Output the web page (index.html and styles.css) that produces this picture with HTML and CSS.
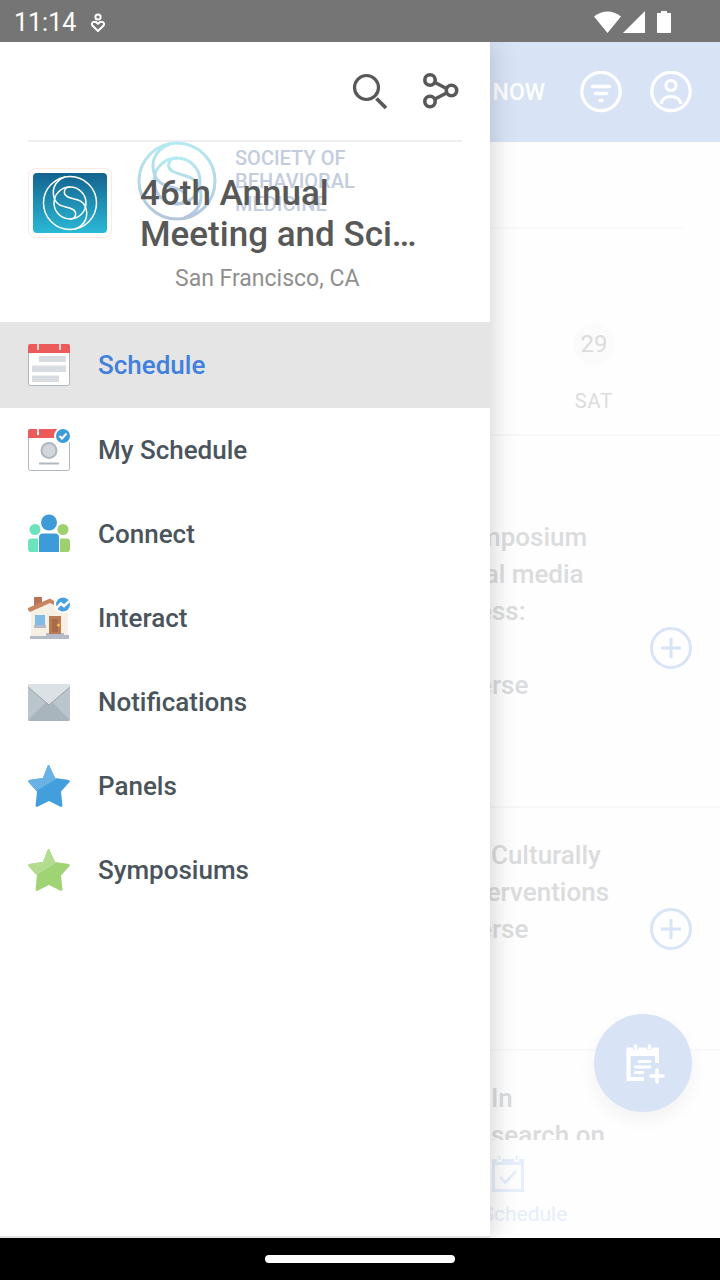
FILE: index.html
```html
<!DOCTYPE html>
<html lang="en">
<head>
	<meta charset="UTF-8">
	<meta name="viewport" content="width=device-width, initial-scale=1">
	<title>Schedule</title>
	<link rel="stylesheet" href="styles.css">
</head>
<body>
	<div class="screen">
		<div class="status">
			<span class="clock">11:14</span>
			<svg class="status-heart" width="16" height="20" viewBox="0 0 16 20" fill="none" stroke="#fff" stroke-width="2">
				<circle cx="8" cy="4" r="2.6"/>
				<path d="M8 18L2.6 12.8C.2 9.900 4.600 6.800 8 10.800C11.400 6.800 15.800 9.900 13.400 12.800Z" stroke-linejoin="round"/>
			</svg>
			<svg class="status-icons" width="78" height="24" viewBox="0 0 78 24" fill="#fff">
				<path d="M0 5.500Q13.500-4.500 27 5.500L13.500 22Z"/>
				<path d="M51 0V22H29Z"/>
				<path d="M63 2H67V0H73V2H77V22H63Z"/>
			</svg>
		</div>

		<div class="stage">
			<aside class="drawer">
				<div class="tools">
					<button type="button" aria-label="Search">
						<svg width="42" height="42" viewBox="0 0 42 42" fill="none" stroke="#585858" stroke-width="3.200">
							<circle cx="16.500" cy="17.500" r="12"/>
							<path d="M26.500 28.500L36 38" stroke-width="3.800"/>
						</svg>
					</button>
					<button type="button" aria-label="Share">
						<svg width="42" height="42" viewBox="0 0 42 42" fill="none" stroke="#585858" stroke-width="3.600">
							<circle cx="10" cy="10" r="5.200"/>
							<circle cx="10" cy="31.500" r="5.200"/>
							<circle cx="31.500" cy="20.500" r="5.200"/>
							<path d="M15 12.500L26.500 18.500M15 29L26.500 23"/>
						</svg>
					</button>
				</div>

				<div class="event">
					<div class="brand">
						<svg width="80" height="80" viewBox="0 0 80 80" fill="none" stroke="url(#brandLine)" stroke-width="3">
							<defs>
								<linearGradient id="brandLine" x1="0" y1="0" x2="0" y2="1">
									<stop offset="0" stop-color="#b5eaf2"/>
									<stop offset="1" stop-color="#b4c6dc"/>
								</linearGradient>
							</defs>
							<circle cx="40" cy="40" r="38"/>
							<circle cx="40" cy="40" r="23"/>
							<path d="M33 3C17 9 13 22 18 35C22 45 34 45 43 49C52 53 49 63 40 63"/>
							<path d="M47 77C63 71 67 58 62 45C58 35 46 35 37 31C28 27 31 17 40 17"/>
						</svg>
						<p>SOCIETY OF<br>BEHAVIORAL<br>MEDICINE</p>
					</div>
					<div class="thumb">
						<svg width="74" height="60" viewBox="0 0 74 60" fill="none" stroke="#fff" stroke-width="1.500">
							<circle cx="37" cy="30" r="26.500"/>
							<circle cx="37" cy="30" r="16"/>
							<path d="M32 4C21 8 18 18 22 27C25 34 33 33 39 36C45 39 43 46 37 46"/>
							<path d="M42 56C53 52 56 42 52 33C49 26 41 27 35 24C29 21 31 14 37 14"/>
						</svg>
					</div>
					<div class="event-text">
						<h1>46th Annual<br>Meeting and Sci…</h1>
						<p>San Francisco, CA</p>
					</div>
				</div>

				<nav class="menu">
					<a href="#" class="active">
						<svg width="42" height="42" viewBox="0 0 42 42">
							<rect x=".5" y="2" width="41" height="39.500" rx="2" fill="#fff" stroke="#b0b7bd"/>
							<path d="M0 9V2Q0 0 2 0H9V6H11V0H31V6H33V0H40Q42 0 42 2V9Z" fill="#ed5a5a"/>
							<path d="M9 0H11V6H9ZM31 0H33V6H31Z" fill="#e5d5d5"/>
							<path d="M11 12H38V18H11ZM4 21.500H38V28H4ZM4 31.500H31V38H4Z" fill="#d9dde1"/>
						</svg>
						<span>Schedule</span>
					</a>
					<a href="#">
						<svg width="42" height="42" viewBox="0 0 42 42">
							<rect x=".5" y="2" width="41" height="39.500" rx="2" fill="#fff" stroke="#b0b7bd"/>
							<path d="M0 9V2Q0 0 2 0H9V6H11V0H30V9Z" fill="#ed5a5a"/>
							<circle cx="35" cy="7" r="9" fill="#fff"/>
							<circle cx="35" cy="7" r="7" fill="#3d9bd8"/>
							<path d="M31.500 7L34 9.500L38.500 4.500" fill="none" stroke="#fff" stroke-width="2"/>
							<circle cx="21" cy="21.500" r="7.500" fill="#d3d7db" stroke="#aeb7bd" stroke-width="2"/>
							<path d="M11 34.500H31" stroke="#b0b9c0" stroke-width="2"/>
						</svg>
						<span>My Schedule</span>
					</a>
					<a href="#">
						<svg width="42" height="42" viewBox="0 0 42 42">
							<g fill="#6be3bf"><circle cx="7" cy="16.500" r="5.500"/><path d="M0 36V28.500Q0 25.500 4 25.500H10V39H3Q0 39 0 36Z"/></g>
							<g fill="#9fd06f"><circle cx="35" cy="16.500" r="5.500"/><path d="M32 39V25.500H38Q42 25.500 42 28.500V36Q42 39 39 39Z"/></g>
							<circle cx="21" cy="9.500" r="8" fill="#3d9bd8"/>
							<path d="M11 39V24Q11 20.500 15 20.500H27Q31 20.500 31 24V39Z" fill="#3d9bd8"/>
						</svg>
						<span>Connect</span>
					</a>
					<a href="#">
						<svg width="42" height="42" viewBox="0 0 42 42">
							<path d="M3 15L24 4L40 16V39H3Z" fill="#f6efe4"/>
							<path d="M6 0H14V10H6Z" fill="#b57456"/>
							<path d="M0 11L22 1.500L26 4V8L22 6L2 15L0 13Z" fill="#c98562"/>
							<path d="M7 18H17V29H7Z" fill="#7fbbe6"/>
							<path d="M6 28H18V31H6ZM2 39H18V36H36V38H41V42H2Z" fill="#b4bbc8"/>
							<path d="M21 19H33V37H21Z" fill="#b97a55"/>
							<path d="M24 22H30V35H24Z" fill="#a9694a"/>
							<circle cx="30.500" cy="28" r="1.500" fill="#f4c542"/>
							<circle cx="35" cy="7.500" r="9" fill="#fff"/>
							<circle cx="35" cy="7.500" r="7" fill="#4a9fe0"/>
							<path d="M28.500 11L33 6.500L36 9L41.500 4" fill="none" stroke="#fff" stroke-width="2.500"/>
						</svg>
						<span>Interact</span>
					</a>
					<a href="#">
						<svg width="42" height="42" viewBox="0 0 42 42">
							<rect y="3" width="42" height="37" rx="2" fill="#bac5cc"/>
							<path d="M0 39L21 18L42 39Q41 40 40 40H2Q1 40 0 39Z" fill="#a9b5bd"/>
							<path d="M0 5Q0 3 2 3H40Q42 3 42 5V6L21 24L0 6Z" fill="#dbe1e5"/>
							<path d="M0 6L21 24L42 6" fill="none" stroke="#98a3ab"/>
						</svg>
						<span>Notifications</span>
					</a>
					<a href="#">
						<svg width="42" height="42" viewBox="0 0 42 42">
							<path d="M21 0L27 13L41 15L42 16.500L33 26.500L34.500 41L33 42L21 36L9 42L7.500 41L9 26.500L0 16.500L1 15L15 13L20 0Z" fill="#439fdc"/>
							<path d="M20 0H21L27 13L29 13.500L8.500 26L0 16.500L1 15L15 13Z" fill="#69b2e3"/>
						</svg>
						<span>Panels</span>
					</a>
					<a href="#">
						<svg width="42" height="42" viewBox="0 0 42 42">
							<path d="M21 0L27 13L41 15L42 16.500L33 26.500L34.500 41L33 42L21 36L9 42L7.500 41L9 26.500L0 16.500L1 15L15 13L20 0Z" fill="#a0d374"/>
							<path d="M20 0H21L27 13L29 13.500L8.500 26L0 16.500L1 15L15 13Z" fill="#b3dc90"/>
						</svg>
						<span>Symposiums</span>
					</a>
				</nav>
			</aside>

			<main class="app">
				<header class="topbar">
					<button type="button" class="now">NOW</button>
					<button type="button" aria-label="Filter">
						<svg width="42" height="42" viewBox="0 0 42 42" fill="none" stroke="#fff" stroke-width="3.500" stroke-linecap="round">
							<circle cx="21" cy="20.500" r="19.200" stroke-width="3.200"/>
							<path d="M12.500 15.500H29.500M15.500 22.500H26.500M20 29.500H22"/>
						</svg>
					</button>
					<button type="button" aria-label="Profile">
						<svg width="42" height="42" viewBox="0 0 42 42" fill="none" stroke="#fff" stroke-width="3.200">
							<circle cx="21" cy="20.500" r="19.200"/>
							<circle cx="21" cy="14.500" r="5"/>
							<path d="M11 33Q12.500 25.500 21 25.500Q29.500 25.500 31 33"/>
						</svg>
					</button>
				</header>

				<div class="filters"></div>

				<div class="days">
					<div class="day">
						<span class="date">29</span>
						<span class="weekday">SAT</span>
					</div>
				</div>

				<div class="sessions">
					<article class="session tall">
						<h2>mposium<br>ial media<br>ess:<br><br>erse</h2>
						<button type="button" aria-label="Add session">
							<svg width="42" height="42" viewBox="0 0 42 42" fill="none" stroke="#d8e4f7" stroke-width="3">
								<circle cx="21" cy="21" r="19.500"/>
								<path d="M11 21H31M21 11V31"/>
							</svg>
						</button>
					</article>
					<article class="session">
						<h2>&nbsp;&nbsp;Culturally<br>terventions<br>erse</h2>
						<button type="button" aria-label="Add session">
							<svg width="42" height="42" viewBox="0 0 42 42" fill="none" stroke="#d8e4f7" stroke-width="3">
								<circle cx="21" cy="21" r="19.500"/>
								<path d="M11 21H31M21 11V31"/>
							</svg>
						</button>
					</article>
					<article class="session">
						<h2>&nbsp;&nbsp;In<br>&nbsp;&nbsp;search on</h2>
					</article>
				</div>

				<footer class="tabs">
					<a href="#">
						<svg width="34" height="38" viewBox="0 0 34 38" fill="none" stroke="#e6eefa" stroke-width="3">
							<path d="M2.500 6V35.500H31.500V6"/>
							<path d="M1 10V4H6V7H11V4H23V7H28V4H33V10Z" fill="#e6eefa" stroke="none"/>
							<path d="M8.500 1V5M25.500 1V5" stroke-width="2"/>
							<path d="M9 22L14.500 27.500L25 16"/>
						</svg>
						<span>My Schedule</span>
					</a>
				</footer>

				<button type="button" class="fab" aria-label="Add to schedule">
					<svg width="34" height="40" viewBox="0 0 34 40" overflow="visible" fill="none" stroke="#fff" stroke-width="3.500" stroke-linecap="round">
						<path d="M2.500 9V36H18M31 9V20" stroke-linecap="butt" stroke-width="4"/>
						<path d="M.5 13V4.500H6Q9.500 10 13 4.500H20Q23.500 10 27 4.500H33V13Z" fill="#fff" stroke="none"/>
						<path d="M9.500 3V5M23.500 3V5"/>
						<path d="M13 18.500H24M9.500 24H24M9.500 29.500H17" stroke-width="3"/>
						<path d="M31 27V39M25 33H37"/>
					</svg>
				</button>
			</main>
		</div>

		<div class="gesture"><div class="pill"></div></div>
	</div>
</body>
</html>
```

FILE: styles.css
```css
* {
	margin: 0;
	padding: 0;
	box-sizing: border-box;
}
body {
	font-family: Roboto, "Liberation Sans", sans-serif;
	background-color: #000;
}
button {
	border: 0;
	background: none;
	font-family: inherit;
	color: inherit;
	cursor: pointer;
}
a {
	color: inherit;
	text-decoration: none;
}
svg {
	display: block;
	flex: none;
}
.screen {
	display: flex;
	flex-direction: column;
	height: 100vh;
}

/* system bars */
.status {
	display: flex;
	align-items: center;
	height: 42px;
	padding: 3px 48px 0 14px;
	background-color: #757575;
	color: #fff;
}
.clock {
	font-size: 25px;
	line-height: 38px;
}
.status-heart {
	margin-left: 14px;
}
.status-icons {
	margin-left: auto;
}
.gesture {
	display: flex;
	align-items: center;
	justify-content: center;
	height: 42px;
	background-color: #000;
}
.pill {
	width: 190px;
	height: 8px;
	border-radius: 4px;
	background-color: #fff;
}
.stage {
	display: flex;
	flex: 1;
	min-height: 0;
	overflow: hidden;
	background-color: #fefefe;
}

/* drawer */
.drawer {
	position: relative;
	z-index: 2;
	flex: 0 0 490px;
	background-color: #fff;
	border-bottom: 2px solid #e2e2e2;
	box-shadow: 0 0 26px rgba(0,0,0,0.2);
}
.tools {
	display: flex;
	justify-content: flex-end;
	gap: 28px;
	margin: 0 28px;
	padding: 28px 0;
	border-bottom: 2px solid #eee;
}
.event {
	position: relative;
	display: flex;
	gap: 28px;
	height: 180px;
	padding: 26px 28px;
}
.brand {
	position: absolute;
	left: 137px;
	top: -1px;
	display: flex;
	gap: 18px;
	font-size: 20px;
	line-height: 23px;
	font-weight: 500;
	color: #c3cddd;
}
.brand p {
	padding-top: 6px;
}
.thumb {
	flex: none;
	height: 70px;
	padding: 4px;
	border: 1px solid #fbe9e6;
	border-radius: 8px;
}
.thumb svg {
	border-radius: 4px;
	background: linear-gradient(#13638f, #2bb9d6);
}
.event-text {
	position: relative;
	padding-top: 5px;
	color: #585858;
}
.event-text h1 {
	font-size: 35px;
	line-height: 41px;
	font-weight: 500;
}
.event-text p {
	padding: 10px 0 0 35px;
	font-size: 23px;
	line-height: 28px;
	color: #8f8f8f;
}
.menu a {
	display: flex;
	align-items: center;
	gap: 28px;
	height: 84px;
	padding: 0 28px;
	font-size: 26px;
	font-weight: 500;
	color: #4a545c;
}
.menu .active {
	height: 86px;
	background-color: #e5e5e5;
	color: #4180dc;
}

/* faded page behind the drawer */
.app {
	position: relative;
	display: flex;
	flex: 1;
	flex-direction: column;
	min-width: 0;
	margin-left: -42px;
}
.topbar {
	display: flex;
	flex: none;
	align-items: center;
	justify-content: flex-end;
	gap: 28px;
	height: 100px;
	padding: 0 28px;
	background-color: #d8e4f6;
	color: #fff;
}
.now {
	padding-right: 7px;
	font-size: 23px;
	font-weight: 500;
}
.filters {
	flex: none;
	height: 87px;
	margin-right: 37px;
	border-bottom: 2px solid #fafafa;
}
.days {
	display: flex;
	flex: none;
	justify-content: flex-end;
	height: 207px;
	padding: 94px 73px 0 0;
	border-bottom: 2px solid #f8f8f8;
}
.day {
	display: flex;
	flex-direction: column;
	align-items: center;
	gap: 24px;
	width: 106px;
	color: #dcdcdc;
}
.date {
	width: 42px;
	border-radius: 50%;
	background-color: #fbfbfb;
	font-size: 24px;
	line-height: 42px;
	text-align: center;
}
.weekday {
	font-size: 20px;
	line-height: 24px;
	letter-spacing: 1px;
}
.sessions {
	flex: 1;
	min-height: 0;
	padding-top: 54px;
	overflow: hidden;
}
.session {
	display: flex;
	align-items: center;
	justify-content: space-between;
	height: 243px;
	padding: 0 28px 0 30px;
	border-bottom: 2px solid #f8f8f8;
}
.session.tall {
	height: 318px;
}
.session h2 {
	align-self: flex-start;
	padding-top: 29px;
	font-size: 26px;
	line-height: 37px;
	font-weight: 500;
	white-space: nowrap;
	color: #dbdcdd;
}
.tabs {
	display: flex;
	flex: none;
	height: 98px;
	padding-top: 15px;
	background-color: #fefefe;
}
.tabs a {
	display: flex;
	flex-direction: column;
	align-items: center;
	gap: 8px;
	font-size: 21px;
	line-height: 26px;
	color: #e6eefa;
}
.fab {
	position: absolute;
	right: 28px;
	bottom: 126px;
	display: flex;
	align-items: center;
	justify-content: center;
	width: 98px;
	height: 98px;
	border-radius: 50%;
	background-color: #d8e4f6;
	box-shadow: 0 8px 18px rgba(0,0,0,0.05);
}
```
